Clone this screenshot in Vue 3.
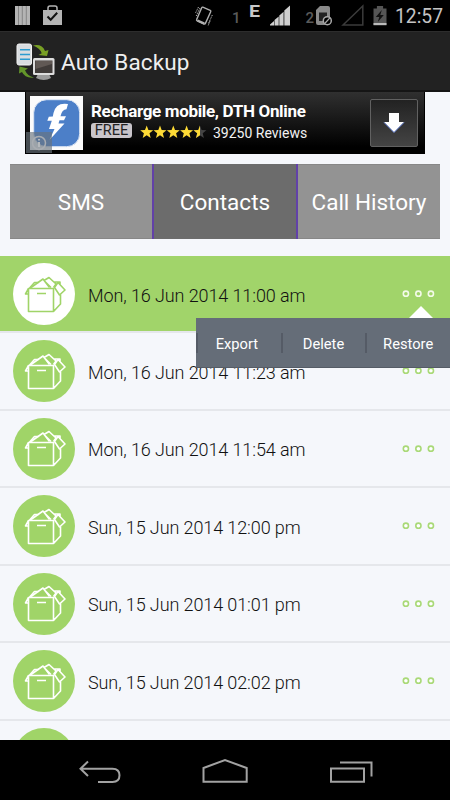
<template>
  <div class="phone">
    <svg class="status" viewBox="0 0 450 31">
      <path d="M15 6h15v19H15z" fill="#b4b4b4" />
      <path d="M18.500 6v19M22.300 6v19M26.300 6v19" stroke="#777" stroke-width=".8" />
      <path d="M43 10h19v15H43z" fill="#b4b4b4" />
      <path d="M48 11V8q0-2 2-2h5q2 0 2 2v3" fill="none" stroke="#b4b4b4" stroke-width="1.5" />
      <path d="M47.5 16.5l3.2 3.3 6.5-7" fill="none" stroke="#111" stroke-width="2" />
      <g fill="none" stroke="#b0b0b0" stroke-width="1.4">
        <path d="M202.8 7.2l7.4 3.1q1 .5.5 1.5l-5.3 11.6q-.4.9-1.4.5l-6.8-3q-1-.5-.5-1.5l5-11.6q.4-.9 1.1-.6z" />
        <path d="M200 8l-3.800 8M198.500 7l-3 6M212.300 15l-4 9M210 21l-2 5" stroke-width="1" stroke-dasharray="1.5 1" />
        <path d="M197.500 20.500l6.800 3.200" stroke-width="2.400" />
      </g>
      <text x="232" y="23" class="sim">1</text>
      <text x="249" y="17.300" class="edge" textLength="11" lengthAdjust="spacingAndGlyphs">E</text>
      <path d="M270 25.500v-1l4-3.500v4.500zM274.500 25.500v-5.400l4.200-3.600v9zM279.300 25.500V15.400l4.300-3.700v13.800zM284.300 25.500V10.600l5.700-5.200v20.100z" fill="#cfcfcf" />
      <text x="305.500" y="23" class="sim">2</text>
      <path d="M316 10l4-4h8q2 0 2 2v15.500q0 1.500-2 1.500h-10q-2 0-2-2z" fill="#8a8a8a" />
      <path d="M319 12.500h8v8.500h-8z" fill="#222" />
      <circle cx="327.300" cy="20.700" r="4" fill="#000" stroke="#a9a9a9" stroke-width="1.500" />
      <path d="M324.700 23.500l5.200-5.600" stroke="#a9a9a9" stroke-width="1.300" />
      <path d="M343 25L362.800 6v19z" fill="none" stroke="#3b3b3b" stroke-width="1.500" />
      <path d="M373.500 8.500h3.400V6h6.200v2.500h3.400V25h-13z" fill="#555" />
      <path d="M373.500 23h13v2.200h-13z" fill="#bbb" />
      <path d="M381.800 10l-6 7h3.500l-1.500 5 6-7h-3.500z" fill="#111" />
      <text x="395" y="23.300" class="clock" textLength="48" lengthAdjust="spacingAndGlyphs">12:57</text>
    </svg>

    <header class="titlebar">
      <svg class="logo" width="40" height="38" viewBox="0 0 40 38">
        <rect x="1" y="1" width="14.500" height="21" rx="2" fill="#d9dde0" stroke="#f2f2f2" />
        <path d="M4 6.700h10M4 11.500h10M4 16.300h10" stroke="#2b9bd0" stroke-width="1.500" />
        <path d="M17 2.500q9-2 12 5.500l3.500-1-1.500 6-8.500-1 3.200-1.800Q24 5 17 2.500z" fill="#789f24" />
        <path d="M18 34.500q-9 1-12-5.500l-3 1.500.5-7 8.500 2-3 1.700q2.500 6 9 7.300z" fill="#63952a" />
        <path d="M22 31h11l2 4q-7 4-15 0z" fill="#9c9c9c" />
        <rect x="17" y="15" width="21.500" height="17" rx="1.500" fill="#dedede" />
        <rect x="19" y="17.500" width="17.500" height="12.500" fill="#403b39" />
        <path d="M19.500 18h16.500v3L19.500 26z" fill="#615955" />
      </svg>
      <h1>Auto Backup</h1>
    </header>

    <div class="ad">
      <svg class="ad-icon" width="53" height="54" viewBox="0 0 53 54">
        <rect width="53" height="54" fill="#fbfbfb" />
        <rect x="3.700" y="3.700" width="46" height="47" rx="13" fill="#4c7fc8" stroke="#dde6f4" />
        <path d="M38 8q-12-2-14.500 9l-.7 3.500-4 .3-1.500 4h4.500L19 33h5.500l-5 11 15-16.500h-6l1-3.200h4.500l2-4h-5.500q1.500-7 6-7z" fill="#fff" />
      </svg>
      <span class="info">
        <svg width="25" height="21" viewBox="0 0 25 21">
          <circle cx="13" cy="11" r="6.500" fill="none" stroke="#a9adb2" stroke-width="1.500" />
          <path d="M13 10v5M13 7v1.500" stroke="#b5b9bd" stroke-width="2" />
        </svg>
      </span>
      <div class="ad-body">
        <div class="ad-title">Recharge mobile, DTH Online</div>
        <div class="ad-meta">
          <span class="free">FREE</span>
          <svg class="stars" width="67" height="14" viewBox="0 0 67 14">
            <path v-for="n in 5" :key="n" :d="star" :transform="`translate(${(n - 1) * 13.3} 0)`" :fill="n < 5 ? '#fdda36' : '#454545'" />
            <path d="M60 .5L58.300 5l-4.800.2 3.700 3-1.200 4.700 4-2.600z" fill="#fdda36" />
          </svg>
          <span class="reviews">39250 Reviews</span>
        </div>
      </div>
      <button class="download">
        <svg width="22" height="22" viewBox="0 0 22 22">
          <path d="M6 1h10v9h5L11 20.500 1 10h5z" fill="#fff" />
          <path d="M1 10.500L11 20.500 21 10.500" fill="none" stroke="#5e7bd0" stroke-width="1" />
        </svg>
      </button>
    </div>

    <nav class="tabs">
      <button v-for="tab in tabs" :key="tab" :class="{ active: tab === activeTab }" @click="activeTab = tab">{{ tab }}</button>
    </nav>

    <ul class="list">
      <li v-for="(item, i) in backups" :key="i" :class="{ selected: i === selected }">
        <span class="badge">
          <svg width="42" height="38" viewBox="0 0 42 38">
            <!-- box front, side and left flap -->
            <path d="M4.500 13.500h25v23h-25zM29.500 36.500l7-7.500V19.500M4.500 13.500l-3 5.500h3M3 16L10.500 7.500h4M13 18.500h9" />
            <!-- sheets sticking out, then the right flap -->
            <path d="M7 12.500L19 4l6.500 8.500M20 5.500l5-3 7 6.500-2.500 3.500M20 5.500l7 7M29.500 7h6.500v3M34 7.500l7 7.500-5.500 5-5-7.500z" />
          </svg>
        </span>
        <span class="date">{{ item }}</span>
        <button class="more" @click="selected = i">
          <svg width="33" height="8" viewBox="0 0 33 8">
            <circle v-for="n in 3" :key="n" :cx="n * 12.5 - 8.6" cy="3.7" r="2.6" />
          </svg>
        </button>
        <div v-if="i === selected" class="popup">
          <span>Export</span>
          <span>Delete</span>
          <span>Restore</span>
        </div>
      </li>
    </ul>

    <svg class="navbar" viewBox="0 0 450 60">
      <g fill="none" stroke="#a2a2a2" stroke-width="2">
        <path d="M88 21.500l-7.500 7.200 7.500 7.300M81 28.700h31.500q7 0 7 6.600t-7 6.600H98" />
        <path d="M203.500 41.700V28L225 20l21.700 8v13.700z" />
        <path d="M331 28.500h33v13.200h-33zM340 22.500h31.500V36.500" />
      </g>
    </svg>
  </div>
</template>

<script setup>
import { ref } from 'vue'

const star = 'M6.700 .5l1.700 4.500 4.800.2-3.700 3 1.200 4.700-4-2.600-4 2.600 1.200-4.700-3.700-3L5 5z'

const tabs = ['SMS', 'Contacts', 'Call History']
const activeTab = ref('Contacts')

const backups = [
  'Mon, 16 Jun 2014 11:00 am',
  'Mon, 16 Jun 2014 11:23 am',
  'Mon, 16 Jun 2014 11:54 am',
  'Sun, 15 Jun 2014 12:00 pm',
  'Sun, 15 Jun 2014 01:01 pm',
  'Sun, 15 Jun 2014 02:02 pm',
  ''
]
const selected = ref(0)
</script>

<style>
body { background: #000; }
</style>

<style scoped>
* { box-sizing: border-box; }
button { border: 0; padding: 0; font-family: inherit; }

.phone {
  width: 450px;
  height: 800px;
  display: flex;
  flex-direction: column;
  overflow: hidden;
  background: #f5f7fb;
  font-family: Roboto, "Noto Sans", sans-serif;
}

.status { flex: none; width: 450px; height: 31px; background: #000; }
.sim    { font-size: 15px; fill: #5a5a5a; font-weight: 500; }
.edge   { font-size: 16.5px; fill: #c8c8c8; font-weight: 700; }
.clock  { font-size: 20px; fill: #c4c4c4; }

.titlebar {
  flex: none;
  height: 61px;
  display: flex;
  align-items: center;
  padding: 2px 0 0 16px;
  background: #222;
  border-top: 1px solid #2d2d2d;
  border-bottom: 2px solid #151515;
}
.titlebar h1 { margin: 0 0 0 5px; font-size: 22.5px; font-weight: 400; color: #efefef; letter-spacing: .15px; }

.ad {
  position: relative;
  flex: none;
  display: flex;
  width: 400px;
  height: 62px;
  margin-left: 25px;
  padding: 4px 6px 0 4px;
  background: linear-gradient(#303030, #000 90%);
  border: 1px solid #000;
  border-top: 0;
}
.ad-icon    { flex: none; }
.info       { position: absolute; left: 0; bottom: 0; width: 26px; height: 21px; background: rgba(105, 115, 125, .65); }
.ad-body    { flex: 1; padding-left: 8px; white-space: nowrap; }
.ad-title   { margin-top: 4px; height: 22px; line-height: 22px; color: #fff; font-size: 17px; font-weight: 700; letter-spacing: -.33px; }
.ad-meta    { display: flex; align-items: center; height: 19px; }
.free       { width: 41px; height: 15px; margin-top: -2px; border-radius: 3px; background: #c9c5ca; color: #222; font-size: 14.5px; line-height: 16px; text-align: center; }
.stars      { margin-left: 8px; }
.reviews    { margin-left: 6px; padding-top: 3px; color: #f2f2f2; font-size: 14px; }
.download   { display: flex; align-items: center; justify-content: center; width: 48px; height: 48px; margin-top: 3px; border: 1px solid #616161; border-radius: 2px; background: linear-gradient(#222, #444); }

.tabs { flex: none; display: flex; height: 75px; margin: 10px 10px 0; }
.tabs button {
  flex: 1 1 142px;
  padding-top: 1px;
  background: #939393;
  border: solid #878787;
  border-width: 1px 0;
  color: #fff;
  font-size: 22.5px;
}
.tabs .active { flex-basis: 146px; background: #6c6c6c; border-color: #6241a8; border-width: 0 2px; }

.list {
  flex: 1;
  min-height: 0;
  margin: 17px 0 0;
  padding: 0;
  list-style: none;
  overflow: hidden;
}
.list li {
  position: relative;
  display: flex;
  align-items: center;
  height: 77.5px;
  padding: 1px 15px 0 13px;
  border-bottom: 2px solid #e5e7eb;
}
.list li.selected { height: 77px; background: #a1d46a; background-clip: padding-box; }
.badge {
  display: flex;
  align-items: center;
  justify-content: center;
  width: 62px;
  height: 62px;
  border-radius: 50%;
  background: #a0d468;
}
.badge svg { fill: none; stroke: #fff; stroke-width: 1.6; stroke-linejoin: round; margin: -1px 0 0 1px; }
.selected .badge { background: #fff; }
.selected .badge svg { stroke: #a0d468; }
.date { flex: 1; margin-left: 13px; padding-top: 2px; font-size: 18px; font-weight: 300; letter-spacing: -.1px; color: #111; white-space: nowrap; }
.more { display: flex; background: none; }
.more circle { fill: #fff; stroke: #a9d977; stroke-width: 1.6; }
.selected .more circle { fill: #a1d46a; stroke: #f3fae9; }

.popup {
  position: absolute;
  z-index: 1;
  top: 62px;
  right: 0;
  width: 254px;
  height: 50px;
  display: flex;
  align-items: center;
  background: #656d78;
  border-bottom: 1px solid #555c66;
  color: #fff;
  font-size: 14.7px;
}
.popup::before {
  content: "";
  position: absolute;
  left: 213px;
  top: -12.5px;
  border: solid transparent;
  border-width: 0 12.5px 12.5px;
  border-bottom-color: #fff;
}
.popup span { width: 85px; height: 20px; line-height: 22px; padding-right: 5px; text-align: center; border-left: 2px solid #555b66; }
.popup span:nth-child(n + 2) { padding-right: 1px; }

.navbar { flex: none; width: 450px; height: 60px; background: #000; }
</style>
